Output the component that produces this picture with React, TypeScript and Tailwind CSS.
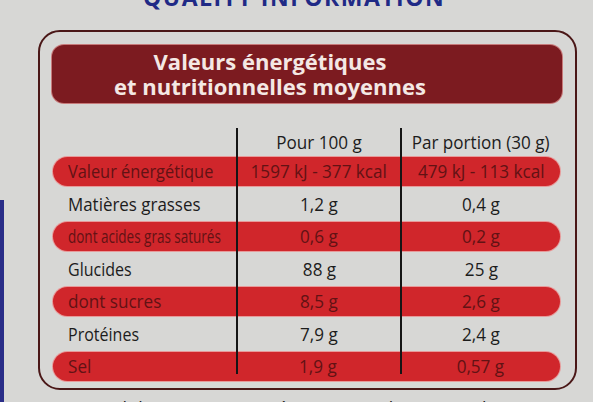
import React from "react";

type Row = { label: string; a: string; b: string; red: boolean; ls: string };

const rows: Row[] = [
  { label: "Valeur énergétique", a: "1597 kJ - 377 kcal", b: "479 kJ - 113 kcal", red: true, ls: "inline-block origin-left scale-x-[0.86]" },
  { label: "Matières grasses", a: "1,2 g", b: "0,4 g", red: false, ls: "inline-block origin-left scale-x-[0.94]" },
  { label: "dont acides gras saturés", a: "0,6 g", b: "0,2 g", red: true, ls: "inline-block origin-left scale-x-[0.71]" },
  { label: "Glucides", a: "88 g", b: "25 g", red: false, ls: "inline-block origin-left scale-x-[0.89]" },
  { label: "dont sucres", a: "8,5 g", b: "2,6 g", red: true, ls: "inline-block origin-left scale-x-[0.9]" },
  { label: "Protéines", a: "7,9 g", b: "2,4 g", red: false, ls: "inline-block origin-left scale-x-[0.89]" },
  { label: "Sel", a: "1,9 g", b: "0,57 g", red: true, ls: "inline-block origin-left scale-x-[0.9]" },
];

export default function App() {
  return (
    <div
      className="relative w-[593px] h-[402px] overflow-hidden bg-[#d7d7d5]"
      style={{ fontFamily: '"Open Sans", "Liberation Sans", sans-serif' }}
    >
      {/* left blue edge */}
      <div className="absolute left-0 top-[200px] w-[4px] h-[202px] bg-[#2a2e88]" />

      {/* clipped top title */}
      <div className="h-[30px] overflow-hidden">
        <div className="-mt-[15px] pl-[143px] text-[23px] font-bold tracking-[1.5px] text-[#1f2a86] leading-[24px] whitespace-nowrap">
          QUALITY INFORMATION
        </div>
      </div>

      {/* main box */}
      <div className="ml-[38px] w-[539px] h-[360px] border-2 border-[#4a1717] rounded-[22px] pl-[12px] pr-[13px] pt-[13px]">
        <div className="h-[58px] rounded-[12px] bg-[#7c1b20] flex flex-col items-center justify-center pr-[74px] text-[#f4e8e4] font-bold text-[22px] leading-[25px] shadow-[0_0_0_1px_#c77a7a]">
          <div>Valeurs énergétiques</div>
          <div>et nutritionnelles moyennes</div>
        </div>

        <div className="mt-[25px] pl-[1px] pr-[2px]">
          <div className="flex h-[29px] items-center text-[18px] text-[#1c1c1c]">
            <div className="w-[183px]" />
            <div className="w-[164px] h-full border-l-2 border-[#151515] flex items-center justify-center">
              <span className="inline-block scale-x-95 whitespace-nowrap">Pour 100 g</span>
            </div>
            <div className="w-[160px] h-full border-l-2 border-[#151515] flex items-center justify-center">
              <span className="inline-block scale-x-95 whitespace-nowrap">Par portion (30 g)</span>
            </div>
          </div>

          {rows.map((r, i) => {
            const last = i === rows.length - 1;
            return (
              <div
                key={i}
                className={
                  r.red
                    ? "flex h-[29px] items-center rounded-full bg-[#d0262b] text-[#621214] shadow-[0_0_0_1px_#e79a9a]"
                    : "flex h-[36px] items-center text-[#1c1c1c]"
                }
              >
                <div className={r.red ? "w-[183px] pl-[15px] whitespace-nowrap text-[19px]" : "w-[183px] pl-[15px] whitespace-nowrap text-[18px]"}>
                  <span className={r.ls}>{r.label}</span>
                </div>
                <div
                  className={
                    last
                      ? "w-[164px] h-full flex items-center justify-center relative text-[19px]"
                      : "w-[164px] h-full border-l-2 border-[#151515] flex items-center justify-center text-[19px]"
                  }
                >
                  {last && <div className="absolute left-0 top-0 h-[22px] w-[2px] bg-[#151515]" />}
                  <span className="inline-block scale-x-90 whitespace-nowrap">{r.a}</span>
                </div>
                <div
                  className={
                    last
                      ? "w-[160px] h-full flex items-center justify-center relative text-[19px]"
                      : "w-[160px] h-full border-l-2 border-[#151515] flex items-center justify-center text-[19px]"
                  }
                >
                  {last && <div className="absolute left-0 top-0 h-[22px] w-[2px] bg-[#151515]" />}
                  <span className="inline-block scale-x-90 whitespace-nowrap">{r.b}</span>
                </div>
              </div>
            );
          })}
        </div>
      </div>

      {/* clipped bottom text */}
      <div className="pl-[66px] pt-[8px] text-[18px] leading-[20px] text-[#1c1c1c] whitespace-nowrap">
        Conseil de conservation : à conserver dans un endroit sec
      </div>
    </div>
  );
}
